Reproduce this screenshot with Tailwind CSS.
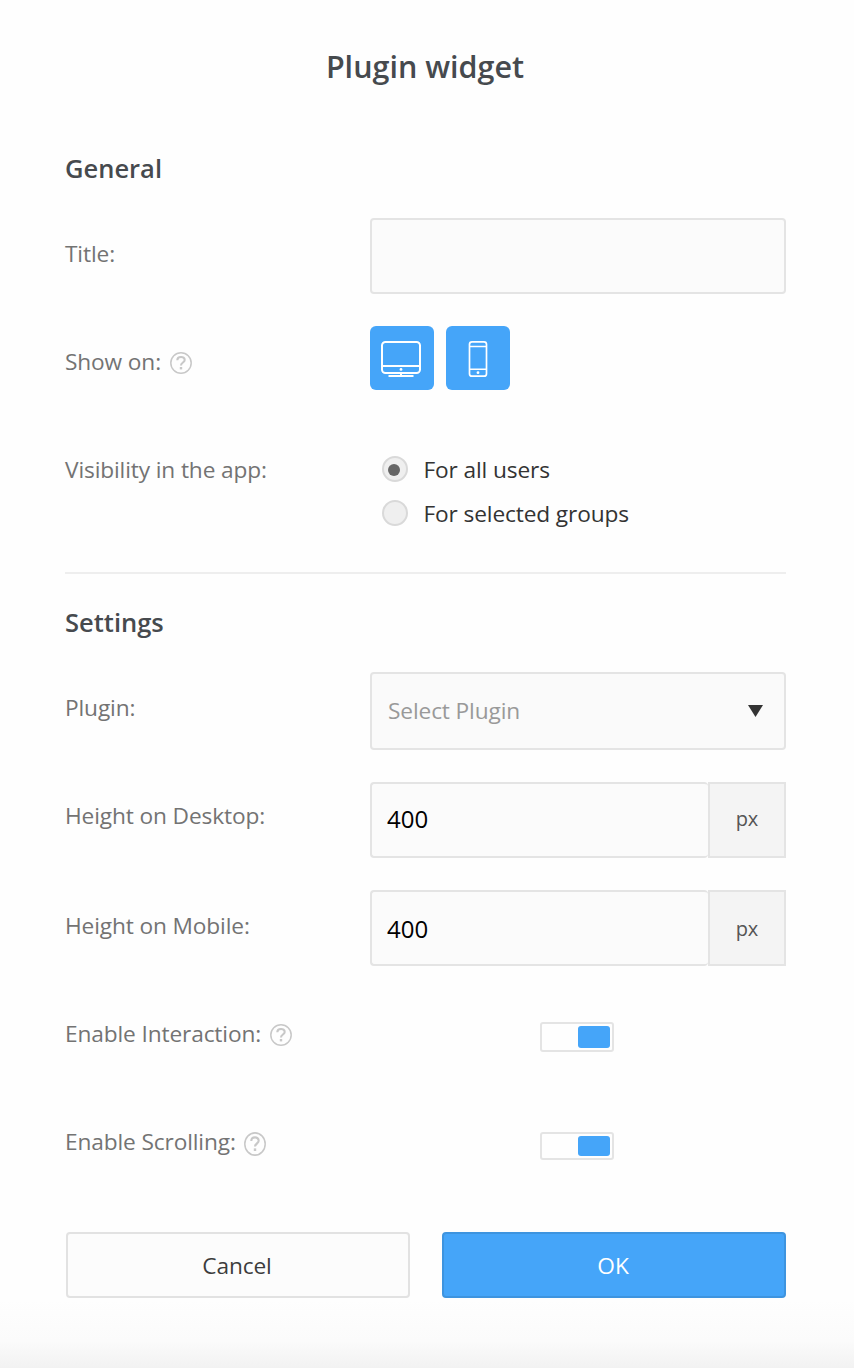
<!DOCTYPE html>
<html lang="en">
<head>
<meta charset="utf-8">
<title>Plugin widget</title>
<script src="https://cdn.jsdelivr.net/npm/@tailwindcss/browser@4"></script>
</head>
<body class="bg-[#fefefe]">
<main class="flex h-[1368px] w-[854px] flex-col bg-linear-to-b from-[#fefefe] from-95% via-[#fbfbfb] via-98% to-[#f2f2f2] pl-[65px] pr-[68px] font-['Open_Sans',sans-serif] text-[22.7px] tracking-[-0.13px] text-[#737373]">
  <h1 class="h-[134px] pr-px text-center text-[30.5px] font-semibold leading-[132px] tracking-normal text-[#464a4e]">Plugin widget</h1>
  <h2 class="h-[84px] text-[25.5px] font-semibold leading-[68px] tracking-normal text-[#464a4e]">General</h2>

  <div class="flex h-[108px]">
    <span class="w-[305px] leading-[72px]">Title:</span>
    <div class="h-[76px] w-[416px] rounded-[4px] border-2 border-[#e4e4e4] bg-[#fbfbfb]"></div>
  </div>

  <div class="flex h-[108px]">
    <div class="flex w-[305px] items-start">
      <span class="w-[105px] leading-[72px]">Show on:</span>
      <svg class="mt-[26px] h-[22px] w-[22px]" viewBox="0 0 22 22" fill="none" stroke="#c8c8c8"><circle cx="11" cy="11" r="10.2" stroke-width="1.5"/><path d="M7.3 8.2C7.3 3.9 14.7 3.9 14.7 8C14.7 10.5 11 10.6 11 13.4" stroke-width="2.1"/><path d="M11 15v2.4" stroke-width="2.4"/></svg>
    </div>
    <div class="flex gap-3">
      <div class="h-16 w-16 rounded-[6px] bg-[#45a5f9]">
        <svg class="h-16 w-16" viewBox="0 0 64 64" fill="none" stroke="#fff"><rect x="12" y="16" width="38" height="31" rx="3.5" stroke-width="2"/><path d="M12 40h38" stroke-width="1.8"/><path d="M31 47v3" stroke-width="2"/><path d="M18.5 50h25" stroke-width="2"/><circle cx="31" cy="43.4" r="1.4" fill="#fff" stroke="none"/></svg>
      </div>
      <div class="h-16 w-16 rounded-[6px] bg-[#45a5f9]">
        <svg class="h-16 w-16" viewBox="0 0 64 64" fill="none" stroke="#fff"><rect x="23.5" y="15.8" width="17" height="34.4" rx="2.5" stroke-width="1.7"/><path d="M24 20.5h16.5M24 43.3h16.5" stroke-width="1.5"/><circle cx="32" cy="46.7" r="1.4" fill="#fff" stroke="none"/></svg>
      </div>
    </div>
  </div>

  <div class="flex h-[138px]">
    <span class="w-[317px] leading-[72px]">Visibility in the app:</span>
    <div class="flex flex-col gap-[18px] pt-[22px] text-[#333]">
      <div class="flex h-[26px] items-center gap-[15.5px]">
        <span class="flex h-[26px] w-[26px] items-center justify-center rounded-full border-2 border-[#d9d9d9] bg-[#efefef] pr-0.5 pt-px"><i class="h-3 w-3 rounded-full bg-[#666]"></i></span>
        <span class="pt-0.5 leading-[26px]">For all users</span>
      </div>
      <div class="flex h-[26px] items-center gap-[15.5px]">
        <span class="h-[26px] w-[26px] rounded-full border-2 border-[#d9d9d9] bg-[#efefef]"></span>
        <span class="pt-0.5 leading-[26px]">For selected groups</span>
      </div>
    </div>
  </div>

  <hr class="w-[721px] border-t-2 border-[#eee]">
  <h2 class="h-[98px] text-[25.5px] font-semibold leading-[97px] tracking-normal text-[#464a4e]">Settings</h2>

  <div class="flex h-[110px]">
    <span class="w-[305px] leading-[72px]">Plugin:</span>
    <div class="flex h-[78px] w-[416px] items-center justify-between rounded-[4px] border-2 border-[#e4e4e4] bg-[#fafafa] pl-4 pr-[21px] text-[#999]">
      <span>Select Plugin</span>
      <svg class="h-3 w-[15px]" viewBox="0 0 15 12"><path d="M0 0h15L7.5 12z" fill="#333"/></svg>
    </div>
  </div>

  <div class="flex h-[108px]">
    <span class="w-[305px] leading-[68px]">Height on Desktop:</span>
    <div class="flex h-[76px] w-[338px] items-center rounded-[4px] border-2 border-r-0 border-[#e4e4e4] bg-[#fbfbfb] pb-0.5 pl-[15px] text-[24px] tracking-normal text-black">400</div>
    <div class="flex h-[76px] w-[78px] items-center justify-center border-2 border-[#e4e4e4] bg-[#f4f4f4] pb-0.5 text-[20px] text-[#555]">px</div>
  </div>

  <div class="flex h-[132px]">
    <span class="w-[305px] leading-[72px]">Height on Mobile:</span>
    <div class="flex h-[76px] w-[338px] items-center rounded-[4px] border-2 border-r-0 border-[#e4e4e4] bg-[#fbfbfb] pl-[15px] pt-0.5 text-[24px] tracking-normal text-black">400</div>
    <div class="flex h-[76px] w-[78px] items-center justify-center border-2 border-[#e4e4e4] bg-[#f4f4f4] pt-0.5 text-[20px] text-[#555]">px</div>
  </div>

  <div class="flex h-[110px] items-start">
    <span class="w-[205px] leading-[24px]">Enable Interaction:</span>
    <svg class="mt-0.5 h-[22px] w-[22px]" viewBox="0 0 22 22" fill="none" stroke="#c8c8c8"><circle cx="11" cy="11" r="10.2" stroke-width="1.5"/><path d="M7.3 8.2C7.3 3.9 14.7 3.9 14.7 8C14.7 10.5 11 10.6 11 13.4" stroke-width="2.1"/><path d="M11 15v2.4" stroke-width="2.4"/></svg>
    <div class="ml-[248px] flex h-[30px] w-[74px] justify-end rounded-[3px] border-2 border-[#e4e4e4] p-0.5"><i class="w-8 rounded-[3px] bg-[#45a5f9]"></i></div>
  </div>

  <div class="flex h-[100px] items-start">
    <span class="w-[179px] leading-[20px]">Enable Scrolling:</span>
    <svg class="h-6 w-[22px]" viewBox="0 0 22 22" preserveAspectRatio="none" fill="none" stroke="#c8c8c8"><circle cx="11" cy="11" r="10.2" stroke-width="1.5"/><path d="M7.3 8.2C7.3 3.9 14.7 3.9 14.7 8C14.7 10.5 11 10.6 11 13.4" stroke-width="2.1"/><path d="M11 15v2.4" stroke-width="2.4"/></svg>
    <div class="ml-[274px] flex h-[28px] w-[74px] justify-end rounded-[3px] border-2 border-[#e4e4e4] p-0.5"><i class="w-8 rounded-[3px] bg-[#45a5f9]"></i></div>
  </div>

  <div class="ml-px flex gap-8">
    <button class="h-[66px] w-[344px] rounded-[4px] border-2 border-[#e2e2e2] bg-[#fcfcfc] pr-0.5 pt-0.5 text-[#3c3c3c]">Cancel</button>
    <button class="h-[66px] w-[344px] rounded-[4px] border-2 border-[#3e94df] bg-[#45a5f9] pr-0.5 pt-0.5 text-white">OK</button>
  </div>
</main>
</body>
</html>
